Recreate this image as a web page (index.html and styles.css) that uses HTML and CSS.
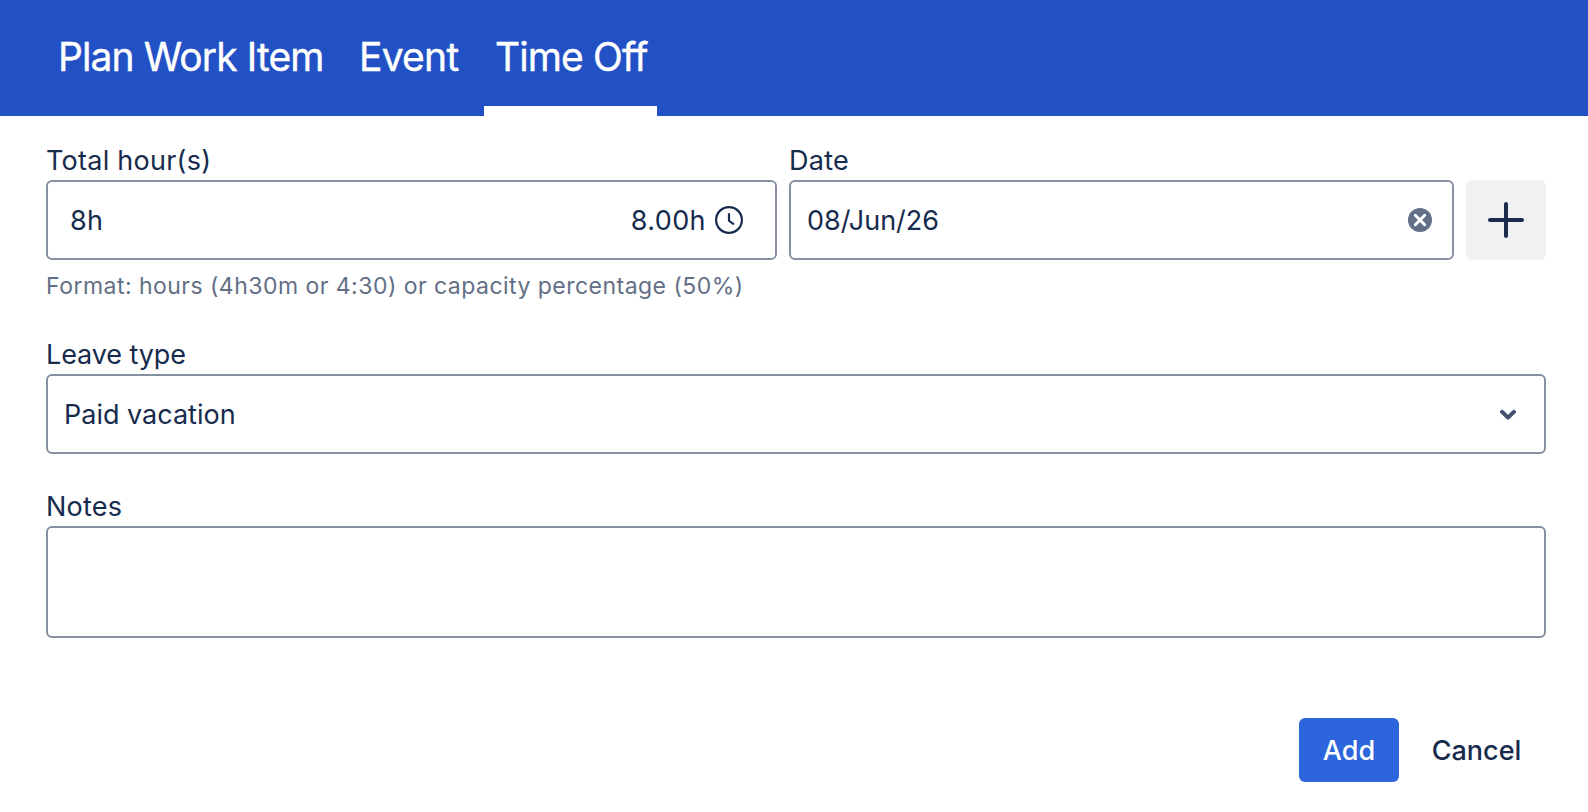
FILE: index.html
```
<!DOCTYPE html>
<html lang="en">
<head>
<meta charset="utf-8">
<title>Time Off</title>
<link rel="stylesheet" href="styles.css">
</head>
<body>
<nav class="tabs">
  <a class="tab tab-plan"><span>Plan Work Item</span></a>
  <a class="tab tab-event"><span>Event</span></a>
  <a class="tab tab-off active"><span>Time Off</span></a>
</nav>
<main class="form">
  <div class="row">
    <div class="field hours">
      <label class="label">Total hour(s)</label>
      <div class="box hours-box">
        <span class="amount">8h</span>
        <span class="total"><span class="amount">8.00h</span>
          <svg class="clock" width="28" height="28" viewBox="0 0 28 28" fill="none" stroke="currentColor"><circle cx="14" cy="14" r="12.9" stroke-width="2.2"/><path d="M14 7.3V14.8L19 18.4" stroke-width="2.2"/></svg>
        </span>
      </div>
    </div>
    <div class="field date">
      <label class="label">Date</label>
      <div class="box date-box">
        <span>08/Jun/26</span>
        <svg class="clear" width="24" height="24" viewBox="0 0 24 24"><circle cx="12" cy="12" r="12" fill="#626F86"/><path d="M7.3 7.3l9.4 9.4M16.7 7.3l-9.4 9.4" stroke="#fff" stroke-width="2.9" stroke-linecap="round"/></svg>
      </div>
    </div>
    <button class="plus" aria-label="Add date"><svg width="36" height="36" viewBox="0 0 36 36" stroke="currentColor" stroke-width="4" stroke-linecap="round"><path d="M18 2V34M2 18H34"/></svg></button>
  </div>
  <p class="hint">Format: hours (4h30m or 4:30) or capacity percentage (50%)</p>
  <div class="field leave">
    <label class="label label-leave">Leave type</label>
    <div class="box select-box">
      <span>Paid vacation</span>
      <svg width="16" height="12" viewBox="0 0 16 12" fill="none" stroke="#44546F" stroke-width="4" stroke-linecap="round" stroke-linejoin="round"><path d="M2 3.8L8 9.6L14 3.8"/></svg>
    </div>
  </div>
  <div class="field notes">
    <label class="label">Notes</label>
    <div class="box notes-box"></div>
  </div>
  <div class="actions">
    <button class="btn primary">Add</button>
    <button class="btn subtle">Cancel</button>
  </div>
</main>
</body>
</html>
```

FILE: styles.css
```
* { box-sizing: border-box; }
body {
  margin: 0;
  background: #fff;
  color: #172B4D;
  font-family: Inter, "Liberation Sans", sans-serif;
  font-size: 27px;
  line-height: 40px;
}
.tabs {
  display: flex;
  height: 116px;
  padding-left: 48px;
  background: #2251C5;
  color: #fff;
  font-size: 39px;
  line-height: 113px;
  letter-spacing: -0.9px;
  -webkit-text-stroke: 0.4px #fff;
  white-space: nowrap;
}
.tab { height: 116px; }
.tab-plan { width: 300px; padding-left: 10px; }
.tab-event { width: 136px; padding-left: 11px; letter-spacing: -0.75px; }
.tab-off { width: 173px; padding-left: 11px; }
.active { border-bottom: 10px solid #fff; }
.form { padding: 24px 42px 0 46px; }
.row { display: flex; gap: 12px; align-items: flex-end; }
.hours { width: 731px; }
.date { width: 665px; }
.label { display: block; height: 40px; line-height: 42px; letter-spacing: 0.25px; white-space: nowrap; }
.label-leave { letter-spacing: -0.1px; }
.box {
  display: flex;
  align-items: center;
  justify-content: space-between;
  height: 80px;
  border: 2px solid #8590A2;
  border-radius: 6px;
  white-space: nowrap;
}
.box > span { padding-top: 1px; }
.amount { letter-spacing: 0.4px; }
.hours-box { padding: 0 32px 0 22px; }
.hours-box .total { display: flex; align-items: center; gap: 9px; padding-top: 0; }
.total .amount { padding-top: 1px; }
.date-box { padding: 0 20px 0 16px; }
.plus {
  display: flex;
  align-items: center;
  justify-content: center;
  width: 80px;
  height: 80px;
  padding: 0;
  border: 0;
  border-radius: 6px;
  background: #F0F1F3;
  color: #1D2B50;
}
.hint {
  height: 74px;
  margin: 0;
  padding-top: 10px;
  color: #626F86;
  font-size: 23px;
  line-height: 33px;
  letter-spacing: 0.47px;
}
.select-box { padding: 0 28px 0 16px; }
.notes { margin-top: 32px; }
.notes-box { height: 112px; }
.actions { display: flex; justify-content: flex-end; margin-top: 80px; gap: 8px; }
.btn {
  height: 64px;
  padding: 1px 0 0;
  border: 0;
  border-radius: 6px;
  font: inherit;
  font-weight: 500;
}
.primary { width: 100px; background: #2D65DC; color: #fff; }
.subtle { width: 139px; background: #fff; color: #172B4D; }
```
